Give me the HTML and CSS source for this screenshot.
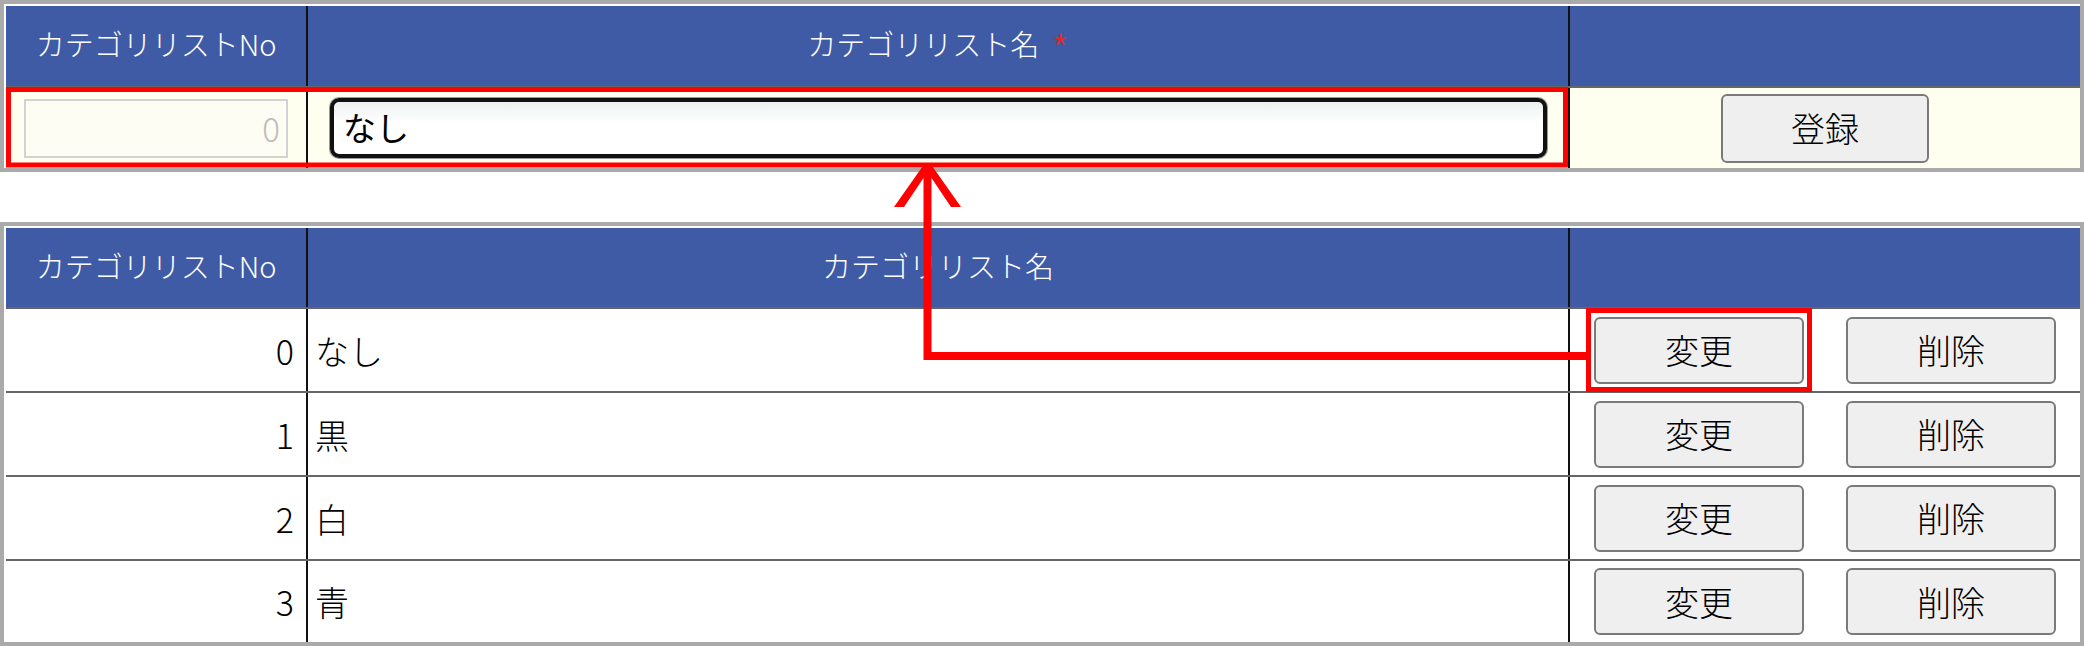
FILE: index.html
```html
<!DOCTYPE html>
<html lang="ja">
<head>
<meta charset="utf-8">
<title>カテゴリリスト</title>
<link rel="stylesheet" href="styles.css">
</head>
<body>
<div class="page">
  <section class="panel panel-edit">
    <div class="row head">
      <div class="cell c1">カテゴリリストNo</div>
      <div class="cell c2">カテゴリリスト名<span class="req">*</span></div>
      <div class="cell c3"></div>
    </div>
    <div class="row edit">
      <div class="cell c1"><div class="numbox">0</div></div>
      <div class="cell c2"><div class="textbox">なし</div></div>
      <div class="cell c3"><button class="btn btn-reg">登録</button></div>
    </div>
  </section>

  <section class="panel panel-list">
    <div class="row head">
      <div class="cell c1">カテゴリリストNo</div>
      <div class="cell c2">カテゴリリスト名</div>
      <div class="cell c3"></div>
    </div>
    <div class="row item">
      <div class="cell c1 num">0</div>
      <div class="cell c2 name">なし</div>
      <div class="cell c3 acts"><button class="btn">変更</button><button class="btn">削除</button></div>
    </div>
    <div class="row item">
      <div class="cell c1 num">1</div>
      <div class="cell c2 name">黒</div>
      <div class="cell c3 acts"><button class="btn">変更</button><button class="btn">削除</button></div>
    </div>
    <div class="row item">
      <div class="cell c1 num">2</div>
      <div class="cell c2 name">白</div>
      <div class="cell c3 acts"><button class="btn">変更</button><button class="btn">削除</button></div>
    </div>
    <div class="row item last">
      <div class="cell c1 num">3</div>
      <div class="cell c2 name">青</div>
      <div class="cell c3 acts"><button class="btn">変更</button><button class="btn">削除</button></div>
    </div>
  </section>

  <svg class="annot" width="2084" height="646" viewBox="0 0 2084 646" aria-hidden="true">
    <rect x="8.5" y="89.5" width="1557" height="75.5" fill="none" stroke="#ff0000" stroke-width="5"/>
    <rect x="1588.5" y="310.5" width="221" height="79" fill="none" stroke="#ff0000" stroke-width="5"/>
    <polyline points="927.5,166 927.5,356 1588,356" fill="none" stroke="#ff0000" stroke-width="8" stroke-linejoin="miter"/>
    <polygon points="894,207 925,163 930,163 961,207 951,207 927.5,172 904,207" fill="#ff0000"/>
  </svg>
</div>
</body>
</html>
```
FILE: styles.css
```css
* { box-sizing: border-box; }

html, body {
  margin: 0;
  padding: 0;
  background: #ffffff;
}

body {
  font-family: "Noto Sans CJK JP", "Noto Sans", sans-serif;
  color: #000;
  overflow: hidden;
}

.page {
  position: relative;
  width: 2084px;
  height: 646px;
}

.panel {
  width: 2084px;
  border: 4px solid #aaaaaa;
  padding: 2px 0 0 2px;
  background: #ffffff;
}

.panel-list {
  margin-top: 50px;
}

.row {
  display: grid;
  grid-template-columns: 302px 1262px 510px;
}

.cell {
  display: flex;
  align-items: center;
}

.c1, .c2 {
  border-right: 2px solid #111111;
}

.head {
  height: 82px;
  background: #3f5ba5;
  border-bottom: 2px solid #666666;
  color: #ffffff;
  font-size: 29px;
  font-weight: 300;
}

.panel-list .head {
  height: 81px;
}

.head .cell {
  justify-content: center;
  padding-bottom: 6px;
}

.req {
  color: #e02828;
  margin-left: 12px;
  font-size: 40px;
  line-height: 1;
  padding-top: 10px;
}

.edit {
  height: 80px;
  background: #fffff0;
}

.edit .c1 {
  padding: 0 18px;
}

.numbox {
  width: 100%;
  height: 59px;
  border: 2px solid #d2d2d2;
  background: #fdfdf4;
  color: #bdbdbd;
  font-size: 33px;
  font-weight: 300;
  text-align: right;
  padding-right: 6px;
  line-height: 54px;
}

.edit .c2 {
  padding: 0 21px 0 22px;
}

.textbox {
  width: 100%;
  height: 60px;
  border: 4px solid #111111;
  border-radius: 9px;
  box-shadow: 0 0 0 1px #9a9a9a;
  background: linear-gradient(#eef0f0, #ffffff 40%);
  font-size: 33px;
  line-height: 50px;
  padding-left: 9px;
}

.edit .c3 {
  justify-content: center;
}

.btn {
  font-family: "Noto Sans CJK JP", "Noto Sans", sans-serif;
  font-size: 34px;
  font-weight: 300;
  color: #000;
  background: #efefef;
  border: 2px solid #7a7a7a;
  border-radius: 6px;
  padding: 0;
  line-height: 1;
}

.btn-reg {
  width: 208px;
  height: 69px;
}

.item {
  height: 84px;
  border-bottom: 2px solid #666666;
  font-size: 34px;
  font-weight: 300;
}

.item.last {
  height: 81px;
  border-bottom: none;
}

.num {
  justify-content: flex-end;
  padding-right: 12px;
}

.name {
  padding-left: 7px;
}

.acts {
  padding: 0 0 0 24px;
  gap: 42px;
}

.acts .btn {
  width: 210px;
  height: 67px;
}

.annot {
  position: absolute;
  left: 0;
  top: 0;
  pointer-events: none;
}
```
